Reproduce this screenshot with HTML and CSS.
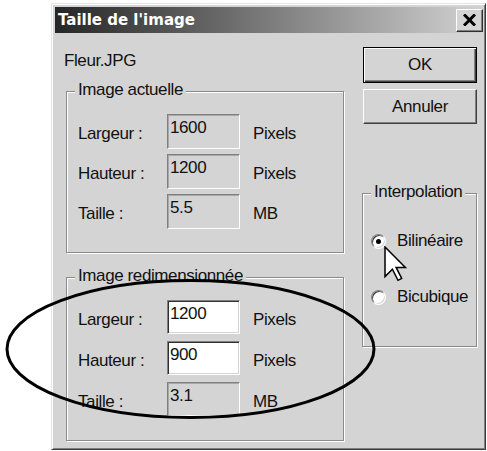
FILE: index.html
```html
<!DOCTYPE html>
<html lang="fr">
<head>
<meta charset="utf-8">
<title>Taille de l'image</title>
<link rel="stylesheet" href="styles.css">
</head>
<body>
<div class="dialog">
  <div class="titlebar">
    <span class="title">Taille de l'image</span>
    <span class="close">
      <svg width="13" height="12" viewBox="0 0 13 12"><path d="M1 0.5 L12 11.5 M12 0.5 L1 11.5" stroke="#000" stroke-width="3" fill="none"/></svg>
    </span>
  </div>
  <div class="content">
    <div class="left">
      <div class="filename">Fleur.JPG</div>
      <div class="group g1">
        <span class="legend">Image actuelle</span>
        <div class="rows">
          <div class="row"><span class="label">Largeur :</span><span class="field">1600</span><span class="unit">Pixels</span></div>
          <div class="row"><span class="label">Hauteur :</span><span class="field">1200</span><span class="unit">Pixels</span></div>
          <div class="row"><span class="label">Taille :</span><span class="field">5.5</span><span class="unit">MB</span></div>
        </div>
      </div>
      <div class="group g2">
        <span class="legend">Image redimensionnée</span>
        <div class="rows">
          <div class="row"><span class="label">Largeur :</span><span class="field edit">1200</span><span class="unit">Pixels</span></div>
          <div class="row"><span class="label">Hauteur :</span><span class="field edit">900</span><span class="unit">Pixels</span></div>
          <div class="row"><span class="label">Taille :</span><span class="field">3.1</span><span class="unit">MB</span></div>
        </div>
      </div>
    </div>
    <div class="right">
      <div class="btn default">OK</div>
      <div class="btn second">Annuler</div>
      <div class="group interp">
        <span class="legend">Interpolation</span>
        <div class="radio-row first"><span class="radio checked"></span><span>Bilinéaire</span></div>
        <div class="radio-row"><span class="radio"></span><span>Bicubique</span></div>
      </div>
    </div>
  </div>
</div>
<svg class="ellipse" width="487" height="451" viewBox="0 0 487 451">
  <ellipse cx="190.5" cy="349" rx="183.5" ry="68.5" fill="none" stroke="#000" stroke-width="3"/>
</svg>
<svg class="cursor" width="24" height="37" viewBox="0 0 24 37">
  <polygon points="1,1 1,30.6 8.4,23.2 14,34.3 17.7,32.5 12.1,21.4 21.4,21.4" fill="#fff" stroke="#000" stroke-width="1.5" stroke-linejoin="miter"/>
</svg>
</body>
</html>
```
FILE: styles.css
```css
* { box-sizing: border-box; }

body {
  margin: 0;
  width: 487px;
  height: 451px;
  overflow: hidden;
  position: relative;
  background: #fff;
  font-family: "Liberation Sans", Arial, sans-serif;
  font-size: 17px;
  letter-spacing: -0.4px;
  line-height: 20px;
  color: #111;
}

.dialog {
  margin: 3px 0 0 51px;
  width: 435px;
  height: 447px;
  background: #d4d4d4;
  border: 1px solid;
  border-color: #e4e4e4 #3a3a3a #3a3a3a #e4e4e4;
  box-shadow: inset 1px 1px 0 #fff, inset -1px -1px 0 #808080;
  padding: 3px 2px 2px 3px;
  display: flex;
  flex-direction: column;
}

.titlebar {
  height: 26px;
  flex: none;
  background: linear-gradient(90deg, #262626, #d2d2d2);
  display: flex;
  align-items: center;
  justify-content: space-between;
  padding: 0 0 0 3px;
}

.title {
  font-family: "DejaVu Sans", sans-serif;
  font-weight: bold;
  font-size: 15px;
  letter-spacing: 0;
  color: #fff;
}

.close {
  width: 27px;
  height: 23px;
  background: #d4d4d4;
  border: 1px solid;
  border-color: #fff #303030 #303030 #fff;
  box-shadow: inset -1px -1px 0 #808080;
  display: flex;
  align-items: center;
  justify-content: center;
}

.content {
  flex: 1;
  display: flex;
  padding-left: 11px;
}

.left {
  width: 278px;
  display: flex;
  flex-direction: column;
}

.filename {
  margin: 18px 0 0 -2px;
}

.group {
  position: relative;
  border: 1px solid #8a8a8a;
  box-shadow: inset 1px 1px 0 #fff, 1px 1px 0 #fff;
}

.legend {
  position: absolute;
  top: -12px;
  left: 8px;
  padding: 0 3px;
  background: #d4d4d4;
  white-space: nowrap;
}

.g1 {
  margin-top: 20px;
  height: 162px;
  padding: 22px 0 0 11px;
}

.g2 {
  margin-top: 24px;
  height: 164px;
  padding: 22px 0 0 11px;
}

.rows {
  display: flex;
  flex-direction: column;
}

.g1 .rows { gap: 5px; }
.g1 .row { height: 35px; }
.g2 .rows { gap: 7px; }
.g2 .row { height: 34px; }

.row {
  display: flex;
  align-items: flex-start;
}

.label {
  width: 89px;
  padding-top: 10px;
}

.field {
  width: 73px;
  height: 100%;
  border: 1px solid;
  border-color: #808080 #fff #fff #808080;
  box-shadow: inset 1px 1px 0 #a8a8a8;
  padding: 3px 2px 0;
  background: #d4d4d4;
}

.field.edit {
  background: #fff;
  box-shadow: inset 1px 1px 0 #303030, inset -1px -1px 0 #d4d4d4;
}

.unit {
  margin-left: 13px;
  padding-top: 10px;
}

.right {
  margin-left: 19px;
  width: 114px;
  display: flex;
  flex-direction: column;
}

.btn {
  display: flex;
  align-items: center;
  justify-content: center;
  background: #d4d4d4;
}

.btn.default {
  margin-top: 14px;
  height: 36px;
  border: 1px solid #000;
  box-shadow: inset 1px 1px 0 #fff, inset -1px -1px 0 #404040, inset -2px -2px 0 #808080;
}

.btn.second {
  margin-top: 6px;
  height: 35px;
  border: 1px solid;
  border-color: #fff #404040 #404040 #fff;
  box-shadow: inset -1px -1px 0 #808080;
}

.interp {
  margin: 69px 0 0 -1px;
  height: 154px;
  padding: 37px 0 0 8px;
}

.radio-row {
  display: flex;
  align-items: center;
  gap: 11px;
  height: 20px;
}

.radio-row + .radio-row {
  margin-top: 36px;
}

.radio {
  position: relative;
  width: 15px;
  height: 15px;
  border-radius: 50%;
  background: #fff;
  border: 1px solid;
  border-color: #808080 #fff #fff #808080;
  box-shadow: inset 1px 1px 0 #404040, inset -1px -1px 0 #d4d4d4;
}

.radio.checked::after {
  content: "";
  position: absolute;
  left: 4px;
  top: 4px;
  width: 5px;
  height: 5px;
  border-radius: 50%;
  background: #000;
}

.ellipse {
  position: absolute;
  left: 0;
  top: 0;
  pointer-events: none;
}

.cursor {
  position: absolute;
  left: 384px;
  top: 246px;
  pointer-events: none;
}
```
